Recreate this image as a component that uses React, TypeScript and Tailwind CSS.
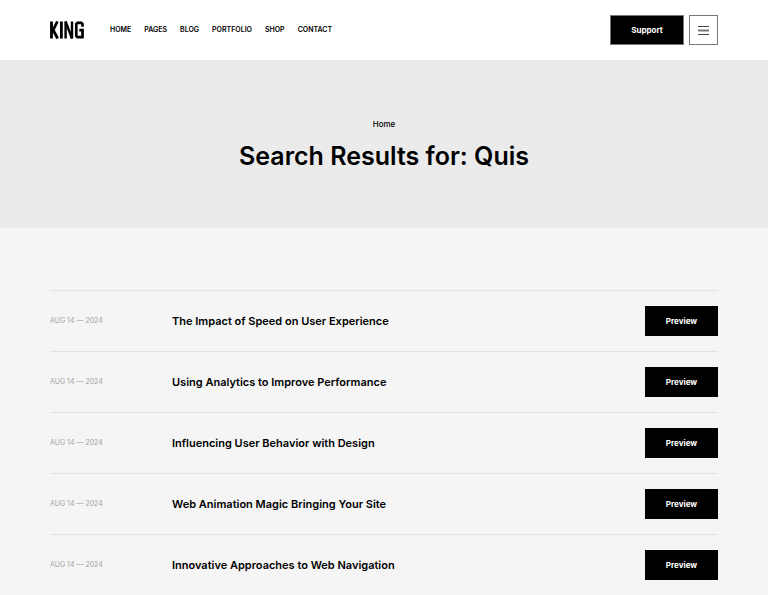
const navItems = ["Home", "Pages", "Blog", "Portfolio", "Shop", "Contact"]

const posts = [
  { title: "The Impact of Speed on User Experience", date: "Aug 14 — 2024" },
  { title: "Using Analytics to Improve Performance", date: "Aug 14 — 2024" },
  { title: "Influencing User Behavior with Design", date: "Aug 14 — 2024" },
  { title: "Web Animation Magic Bringing Your Site", date: "Aug 14 — 2024" },
  { title: "Innovative Approaches to Web Navigation", date: "Aug 14 — 2024" },
]

function Logo() {
  return (
    <svg viewBox="0 0 34 18" className="h-[18px] w-[34px]" fill="none" stroke="#000" strokeWidth="2.8" aria-hidden="true">
      <path d="M1.5 .5v17M7.4 .5L3.2 9l4.4 8.5" />
      <path d="M11.4 .5v17" />
      <path d="M15.6 17.5V.5M22 .5v17" strokeWidth="2.4" />
      <path d="M15.6 .5l6.4 17" strokeWidth="2.4" />
      <path d="M32.5 5.8V3l-1.1-1.1h-4L26.3 3v12l1.1 1.1h5.1V9.2h-3.2" strokeWidth="2.7" />
    </svg>
  )
}

export default function App() {
  return (
    <div className="min-h-screen bg-[#f5f5f5] font-['Inter',sans-serif] text-black">
      <header className="flex h-15 items-center justify-between bg-white px-[50px]">
        <div className="flex items-center gap-[26px]">
          <a href="#" aria-label="King">
            <Logo />
          </a>
          <nav className="flex gap-[13px] text-[7px] leading-3 font-semibold uppercase">
            {navItems.map((item) => (
              <a key={item} href="#">{item}</a>
            ))}
          </nav>
        </div>
        <div className="flex gap-[5px]">
          <button className="h-[30px] w-[74px] border border-[#777] bg-black text-[8px] font-bold text-white">Support</button>
          <button className="flex h-[30px] w-[29px] items-center justify-center border border-[#777]" aria-label="Open menu">
            <svg viewBox="0 0 11 9" className="h-[9px] w-[11px]" stroke="#444" aria-hidden="true">
              <path d="M0 .5h11M0 8.5h11" />
              <path d="M0 4.5h11" stroke="#777" strokeWidth="2" />
            </svg>
          </button>
        </div>
      </header>

      <section className="flex h-[168px] flex-col items-center justify-center gap-2 bg-[#ebebeb] pt-1">
        <a href="#" className="text-[8px] font-medium leading-3">Home</a>
        <h1 className="text-[25px] font-semibold leading-9">Search Results for: Quis</h1>
      </section>

      <main className="px-[50px] pt-[62px]">
        {posts.map((post) => (
          <article key={post.title} className="flex h-[61px] items-center border-t border-[#e2e2e2]">
            <time className="w-[122px] text-[7px] leading-3 uppercase text-[#a3a3a3]">{post.date}</time>
            <h2 className="flex-1 text-[11px] leading-4 font-semibold">{post.title}</h2>
            <button className="h-[30px] w-[73px] bg-black text-[8px] font-bold text-white">Preview</button>
          </article>
        ))}
      </main>
    </div>
  )
}
